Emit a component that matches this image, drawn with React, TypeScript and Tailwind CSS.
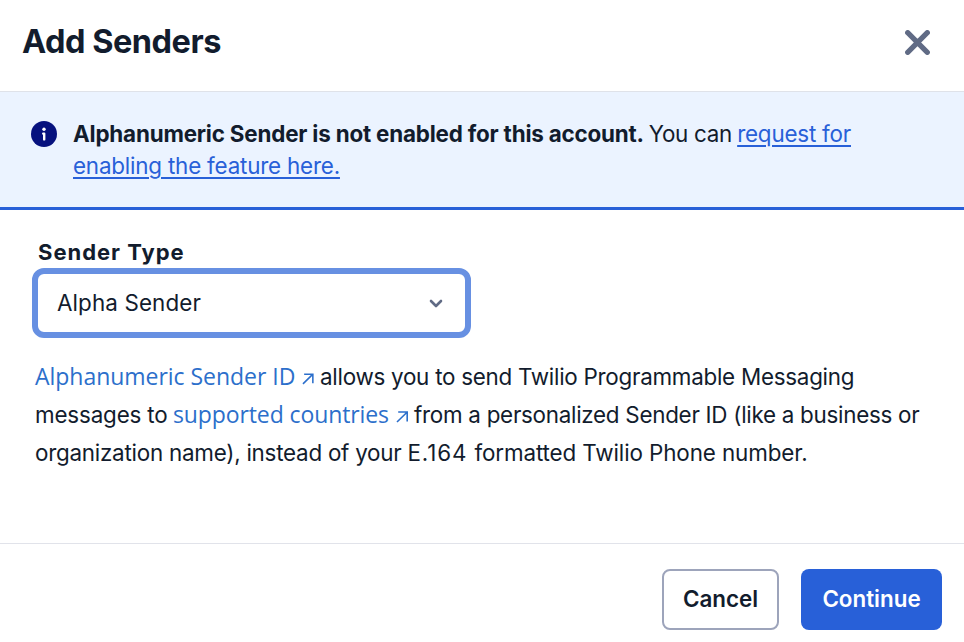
import React from "react";

function Arrow() {
  return (
    <svg className="mt-[3px] mr-[6px] ml-[7px] inline-block h-[12px] w-[12px]" viewBox="0 0 12 12" fill="none" stroke="currentColor" strokeWidth="1.6">
      <path d="M1 11 11 1.2M2.2 1H11.2V10.4" />
    </svg>
  );
}

export default function App() {
  return (
    <div className="flex h-[642px] w-[964px] flex-col overflow-hidden bg-white font-['Inter',sans-serif] text-[#121c2d]">
      <header className="flex h-[91px] shrink-0 items-start justify-between pt-[20px] pr-[34px] pl-[22px]">
        <h1 className="text-[32.5px] leading-[44px] font-bold tracking-[-0.5px] whitespace-nowrap">Add Senders</h1>
        <svg className="mt-[10px] h-[25px] w-[25px]" viewBox="0 0 25 25" fill="none" stroke="#606b85" strokeWidth="5.2" strokeLinecap="round">
          <path d="M2.7 2.7l19.6 19.6M22.3 2.7l-19.6 19.6" />
        </svg>
      </header>
      <section className="flex h-[119px] shrink-0 items-start border-t border-b-[3px] border-t-[#dfe2e9] border-b-[#2860d8] bg-[#ebf3ff] pt-[26px] pl-[31px] text-[22.4px] leading-[32px]">
        <svg className="mt-[3px] mr-[16px] h-[26px] w-[26px] shrink-0" viewBox="0 0 26 26">
          <circle cx="13" cy="13" r="13" fill="#06117e" />
          <circle cx="13" cy="8.2" r="1.7" fill="white" />
          <path d="M12.2 12.6h1v5.8" stroke="white" strokeWidth="2.4" fill="none" strokeLinecap="round" strokeLinejoin="round" />
        </svg>
        <p className="whitespace-nowrap">
          <span className="flex w-[778px] tracking-[-0.2px]">
            <b className="w-[576px] font-bold tracking-[-0.19px]">Alphanumeric Sender is not enabled for this account.</b>
            <span className="w-[88.5px] tracking-[-0.3px]">You can</span>
            <a className="text-[#2860d8] underline decoration-2 underline-offset-[3px]">request for</a>
          </span>
          <a className="tracking-[-0.19px] text-[#2860d8] underline decoration-2 underline-offset-[3px]">enabling the feature here.</a>
        </p>
      </section>
      <main className="flex h-[333px] shrink-0 flex-col items-start">
        <label className="mt-[27px] ml-[38px] text-[22px] leading-[30px] font-bold tracking-[0.98px]">Sender Type</label>
        <div className="mt-[1px] ml-[32px] flex h-[70px] w-[439px] items-center justify-between rounded-[12px] border-[6px] border-[#6790e2] pr-[22px] pl-[19px] text-[22.4px] tracking-[0.12px]">
          Alpha Sender
          <svg className="h-[14px] w-[14px]" viewBox="0 0 14 14" fill="none" stroke="#606b85" strokeWidth="2.6" strokeLinecap="round" strokeLinejoin="round"><path d="M2 5l5 5 5-5" /></svg>
        </div>
        <div className="mt-[20px] ml-[35px] text-[22.4px] leading-[38px] tracking-[-0.09px] whitespace-nowrap">
          <p className="flex h-[38px]">
            <a className="flex w-[285px] items-center justify-between font-['Open_Sans',sans-serif] text-[23px] leading-[36px] tracking-[-0.03px] text-[#2c6fcb]"><span className="-mt-[2px]">Alphanumeric Sender ID</span><Arrow /></a>
            <span className="tracking-[-0.26px]">allows you to send Twilio Programmable Messaging</span>
          </p>
          <p className="flex h-[38px]">
            <span className="w-[138px] tracking-[-0.16px]">messages to</span>
            <a className="flex w-[241px] items-center justify-between font-['Open_Sans',sans-serif] text-[23px] leading-[36px] tracking-[-0.11px] text-[#2c6fcb]"><span className="-mt-[2px]">supported countries</span><Arrow /></a>
            <span className="tracking-[-0.27px]">from a personalized Sender ID (like a business or</span>
          </p>
          <p><span className="tracking-[-0.24px]">organization name), instead of your </span><span className="tracking-[0.85px]">E.164 </span><span className="tracking-[-0.1px]">formatted Twilio Phone number.</span></p>
        </div>
      </main>
      <footer className="flex h-[99px] shrink-0 justify-end gap-[22px] border-t border-[#e1e3ea] pt-[25px] pr-[22px] text-[22.4px] font-semibold">
        <button className="h-[61px] w-[117px] rounded-[8px] border-2 border-[#9da4bb] pb-[2px]">Cancel</button>
        <button className="h-[61px] w-[141px] rounded-[8px] bg-[#2860d8] pb-[2px] text-white">Continue</button>
      </footer>
    </div>
  );
}
